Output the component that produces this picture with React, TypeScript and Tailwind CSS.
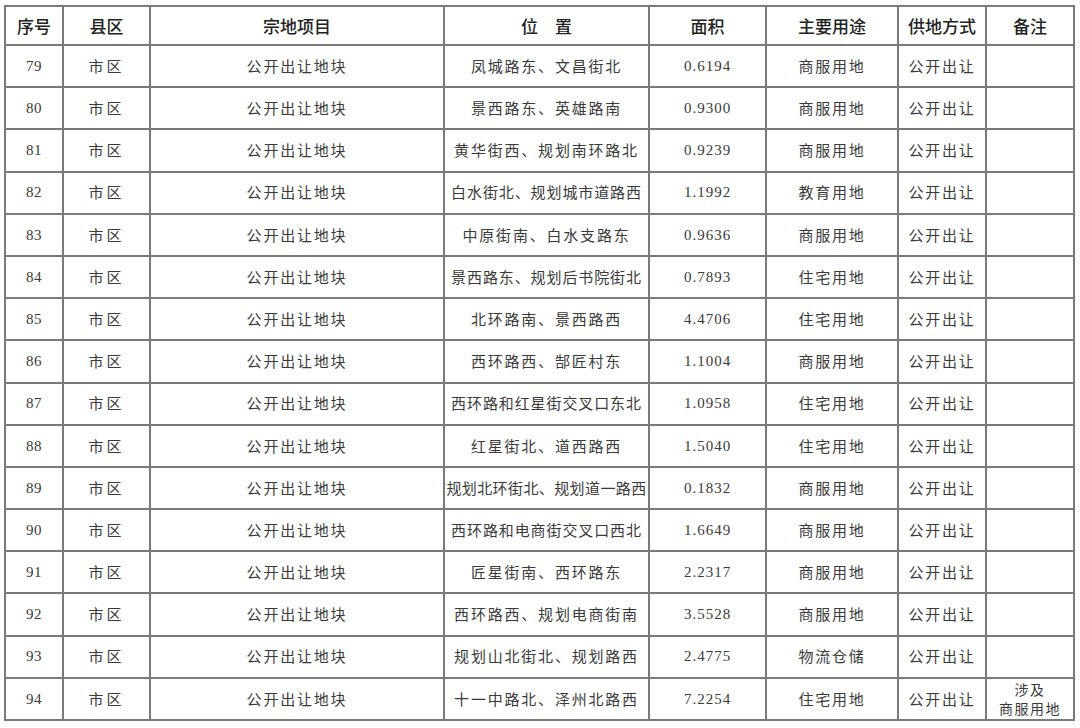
import React from "react";

const rows: [string, string, string, string, string][] = [
  ["79", "凤城路东、文昌街北", "0.6194", "商服用地", ""],
  ["80", "景西路东、英雄路南", "0.9300", "商服用地", ""],
  ["81", "黄华街西、规划南环路北", "0.9239", "商服用地", ""],
  ["82", "白水街北、规划城市道路西", "1.1992", "教育用地", ""],
  ["83", "中原街南、白水支路东", "0.9636", "商服用地", ""],
  ["84", "景西路东、规划后书院街北", "0.7893", "住宅用地", ""],
  ["85", "北环路南、景西路西", "4.4706", "住宅用地", ""],
  ["86", "西环路西、郜匠村东", "1.1004", "商服用地", ""],
  ["87", "西环路和红星街交叉口东北", "1.0958", "住宅用地", ""],
  ["88", "红星街北、道西路西", "1.5040", "住宅用地", ""],
  ["89", "规划北环街北、规划道一路西", "0.1832", "商服用地", ""],
  ["90", "西环路和电商街交叉口西北", "1.6649", "商服用地", ""],
  ["91", "匠星街南、西环路东", "2.2317", "商服用地", ""],
  ["92", "西环路西、规划电商街南", "3.5528", "商服用地", ""],
  ["93", "规划山北街北、规划路西", "2.4775", "物流仓储", ""],
  ["94", "十一中路北、泽州北路西", "7.2254", "住宅用地", "note"],
];

const cjk = { fontFamily: '"Noto Sans CJK SC", "Noto Sans", sans-serif' };
const serif = { fontFamily: '"Liberation Serif", "Noto Sans CJK SC", serif' };

function locTracking(s: string) {
  if (s.length >= 13) return "tracking-[0.4px]";
  if (s.length >= 12) return "tracking-[0.9px]";
  return "tracking-[1.8px]";
}

export default function App() {
  const th = "border-2 border-[#7a7a7a] text-[17px] font-medium text-[#222] text-center align-middle p-0";
  const td = "border-2 border-[#7a7a7a] text-center align-middle p-0 text-[15px] text-[#3a3a3a]";
  return (
    <div className="w-[1080px] h-[728px] bg-white overflow-hidden pt-[5px] pl-[4px]">
      <table className="table-fixed border-collapse w-[1069px]" style={cjk}>
        <colgroup>
          <col className="w-[58px]" />
          <col className="w-[87px]" />
          <col className="w-[294px]" />
          <col className="w-[205px]" />
          <col className="w-[117px]" />
          <col className="w-[132px]" />
          <col className="w-[88px]" />
          <col className="w-[88px]" />
        </colgroup>
        <thead>
          <tr className="h-[39px]">
            <th className={th}>序号</th>
            <th className={th}>县区</th>
            <th className={th}>宗地项目</th>
            <th className={th}>位　置</th>
            <th className={th}>面积</th>
            <th className={th}>主要用途</th>
            <th className={th}>供地方式</th>
            <th className={th}>备注</th>
          </tr>
        </thead>
        <tbody>
          {rows.map(([no, loc, area, use, note]) => (
            <tr key={no} className="h-[42.2px]">
              <td className={td} style={serif}>
                <span className="tracking-[0.5px]">{no}</span>
              </td>
              <td className={`${td} tracking-[3px]`}>市区</td>
              <td className={`${td} tracking-[1.8px]`}>公开出让地块</td>
              <td className={`${td} ${locTracking(loc)} whitespace-nowrap`}>{loc}</td>
              <td className={`${td} tracking-[1px]`} style={serif}>{area}</td>
              <td className={`${td} tracking-[1.8px]`}>{use}</td>
              <td className={`${td} tracking-[1.8px]`}>公开出让</td>
              <td className={`${td} tracking-[1.5px]`}>
                {note ? (
                  <div className="flex flex-col items-center gap-[1px]">
                    <span className="block leading-[18px] text-[14px]">涉及</span>
                    <span className="block leading-[18px] text-[14px]">商服用地</span>
                  </div>
                ) : null}
              </td>
            </tr>
          ))}
        </tbody>
      </table>
    </div>
  );
}
